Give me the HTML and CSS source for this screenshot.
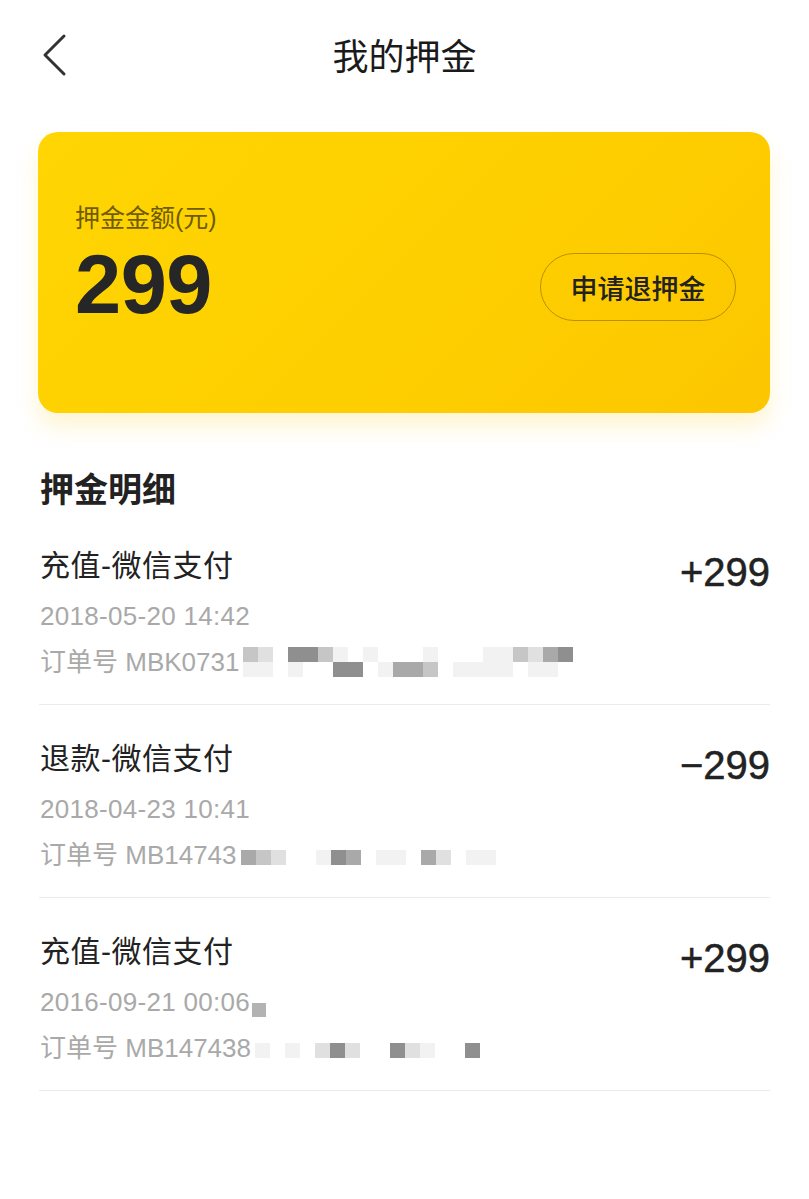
FILE: index.html
```html
<!DOCTYPE html>
<html lang="zh-CN">
<head>
  <meta charset="UTF-8">
  <meta name="viewport" content="width=device-width, initial-scale=1.0">
  <title>我的押金</title>
  <link rel="stylesheet" href="styles.css">
</head>
<body>
  <!-- 顶部导航 -->
  <header class="nav">
    <a class="nav-back" href="#">
      <svg width="28" height="44" viewBox="0 0 28 44"><path d="M23 3 L4 22 L23 41" fill="none" stroke="#333" stroke-width="3" stroke-linecap="round" stroke-linejoin="round"/></svg>
    </a>
    <h1 class="nav-title">我的押金</h1>
    <div></div>
  </header>

  <!-- 押金卡片 -->
  <section class="deposit-card">
    <div class="deposit-info">
      <div class="deposit-label">押金金额(元)</div>
      <div class="deposit-amount">299</div>
    </div>
    <button class="refund-btn">申请退押金</button>
  </section>

  <h2 class="detail-title">押金明细</h2>

  <ul class="record-list">
    <li class="record">
      <div class="record-main">
        <div class="record-name">充值-微信支付</div>
        <div class="record-date">2018-05-20 14:42</div>
        <div class="record-order">
          <span>订单号 MBK0731</span>
          <div class="mosaic m22">
            <i class="c3"></i><i class="c2"></i><i class="c0"></i><i class="c5"></i><i class="c5"></i><i class="c3"></i><i class="c1"></i><i class="c0"></i><i class="c1"></i><i class="c0"></i><i class="c0"></i><i class="c0"></i><i class="c1"></i><i class="c0"></i><i class="c0"></i><i class="c0"></i><i class="c1"></i><i class="c1"></i><i class="c3"></i><i class="c2"></i><i class="c4"></i><i class="c5"></i>
            <i class="c1"></i><i class="c1"></i><i class="c0"></i><i class="c1"></i><i class="c0"></i><i class="c0"></i><i class="c5"></i><i class="c5"></i><i class="c0"></i><i class="c1"></i><i class="c4"></i><i class="c4"></i><i class="c3"></i><i class="c0"></i><i class="c1"></i><i class="c1"></i><i class="c1"></i><i class="c1"></i><i class="c0"></i><i class="c1"></i><i class="c1"></i><i class="c0"></i>
          </div>
        </div>
      </div>
      <div class="record-value">+299</div>
    </li>
    <li class="record">
      <div class="record-main">
        <div class="record-name">退款-微信支付</div>
        <div class="record-date">2018-04-23 10:41</div>
        <div class="record-order">
          <span>订单号 MB14743</span>
          <div class="mosaic m18 tight">
            <i class="c4"></i><i class="c3"></i><i class="c2"></i><i class="c0"></i><i class="c0"></i><i class="c1"></i><i class="c5"></i><i class="c4"></i><i class="c0"></i><i class="c1"></i><i class="c1"></i><i class="c0"></i><i class="c4"></i><i class="c2"></i><i class="c0"></i><i class="c1"></i><i class="c1"></i><i class="c0"></i>
          </div>
        </div>
      </div>
      <div class="record-value">−299</div>
    </li>
    <li class="record">
      <div class="record-main">
        <div class="record-name">充值-微信支付</div>
        <div class="record-date">2016-09-21 00:06<span class="mosaic-dot"></span></div>
        <div class="record-order">
          <span>订单号 MB147438</span>
          <div class="mosaic m16 tight">
            <i class="c1"></i><i class="c0"></i><i class="c1"></i><i class="c0"></i><i class="c2"></i><i class="c5"></i><i class="c2"></i><i class="c0"></i><i class="c0"></i><i class="c5"></i><i class="c2"></i><i class="c1"></i><i class="c0"></i><i class="c0"></i><i class="c5"></i><i class="c0"></i>
          </div>
        </div>
      </div>
      <div class="record-value">+299</div>
    </li>
  </ul>
</body>
</html>
```
FILE: styles.css
```css
html, body {
  margin: 0;
  padding: 0;
  background: #fff;
}
body {
  font-family: "Liberation Sans", "Noto Sans CJK SC", sans-serif;
  color: #222;
}

/* 顶部导航 */
.nav {
  display: grid;
  grid-template-columns: 1fr auto 1fr;
  align-items: center;
  height: 110px;
}
.nav-back {
  display: flex;
  align-items: center;
  padding-left: 41px;
  height: 44px;
}
.nav-title {
  margin: 0;
  font-size: 36px;
  font-weight: 400;
  color: #1a1a1a;
  position: relative;
  top: -1px;
}

/* 押金卡片 */
.deposit-card {
  display: flex;
  justify-content: space-between;
  align-items: flex-start;
  box-sizing: border-box;
  height: 281px;
  margin: 22px 39px 0 38px;
  padding: 70px 34px 0 37px;
  border-radius: 20px;
  background: linear-gradient(135deg, #ffd503 0%, #fecf00 55%, #fcc600 100%);
  box-shadow: 0 14px 22px rgba(252, 200, 0, 0.18);
}
.deposit-label {
  font-size: 25px;
  line-height: 32px;
  color: #6f5c00;
}
.deposit-amount {
  margin-top: 10px;
  font-size: 83px;
  line-height: 82px;
  font-weight: 700;
  color: #262626;
  letter-spacing: -0.5px;
}
.refund-btn {
  margin-top: 51px;
  width: 196px;
  height: 68px;
  border: 1.5px solid rgba(130, 95, 0, 0.55);
  border-radius: 34px;
  background: transparent;
  font-family: inherit;
  font-size: 27px;
  font-weight: 500;
  color: #222;
  cursor: pointer;
}

/* 押金明细 */
.detail-title {
  margin: 55px 0 0 40px;
  font-size: 34px;
  line-height: 44px;
  font-weight: 700;
  color: #222;
}
.record-list {
  list-style: none;
  margin: 0 39px 0 39px;
  padding: 0;
}
.record {
  display: flex;
  justify-content: space-between;
  align-items: flex-start;
  padding: 34px 0 28px 1px;
  border-bottom: 1.5px solid #ececec;
}
.record-name {
  font-size: 30px;
  line-height: 40px;
  color: #222;
  letter-spacing: 0.5px;
}
.record-date {
  margin-top: 13px;
  font-size: 26px;
  line-height: 34px;
  color: #a9a9a9;
  display: flex;
  align-items: flex-end;
  letter-spacing: 0.3px;
}
.record-order {
  margin-top: 9px;
  display: flex;
  align-items: center;
  height: 34px;
  font-size: 26px;
  color: #a9a9a9;
}
.record-value {
  font-size: 40px;
  line-height: 52px;
  color: #222;
  -webkit-text-stroke: 0.5px #222;
}

/* 订单号马赛克 */
.mosaic {
  display: grid;
  grid-auto-rows: 15px;
  margin-left: 4px;
  margin-top: 6px;
}
.mosaic.tight {
  margin-top: 10px;
}
.m22 { grid-template-columns: repeat(22, 15px); }
.m18 { grid-template-columns: repeat(18, 15px); }
.m16 { grid-template-columns: repeat(16, 15px); }
.mosaic i { display: block; }
.c0 { background: transparent; }
.c1 { background: #f2f2f2; }
.c2 { background: #e0e0e0; }
.c3 { background: #c6c6c6; }
.c4 { background: #a9a9a9; }
.c5 { background: #8f8f8f; }
.mosaic-dot {
  display: inline-block;
  width: 14px;
  height: 14px;
  margin-left: 2px;
  margin-bottom: 2px;
  background: #b3b3b3;
}
```
